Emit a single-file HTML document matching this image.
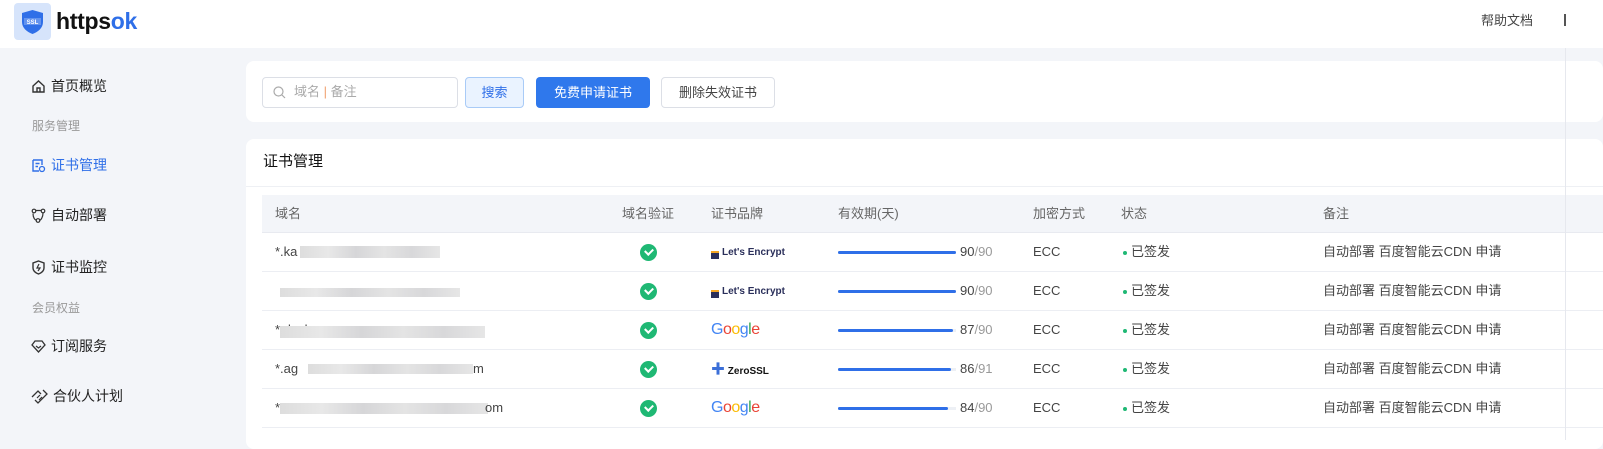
<!DOCTYPE html>
<html><head><meta charset="utf-8"><style>
*{margin:0;padding:0;box-sizing:border-box}
body{width:1603px;height:440px;overflow:hidden;background:#f3f5f9;font-family:"Liberation Sans","Noto Sans CJK SC",sans-serif;color:#333;font-size:14px;position:relative;line-height:20px}
.abs{position:absolute}
.hdr{left:0;top:0;width:1603px;height:48px;background:#fff}
.nav{left:31px;font-size:14px;color:#222;display:flex;align-items:center;gap:5px;line-height:20px}
.grp{left:32px;font-size:12px;color:#999}
.card{background:#fff;border-radius:8px}
.th{color:#666;font-size:13px}
.td{font-size:13px;color:#444}
.row{left:262px;width:1341px;height:39px;border-bottom:1px solid #eceef3}
.bar{height:3px;background:#edf0f5;width:118px;left:838px}
.bar i{display:block;height:3px;background:#2f6fe8;border-radius:2px}
.blur{background:linear-gradient(90deg,#ddd,#e8e8e8 20%,#d6d6d8 40%,#e4e4e4 60%,#d8d8da 80%,#e6e6e6);height:12px}
.chk{width:17px;height:17px;border-radius:50%;background:#1fb874;left:640px}
.chk:after{content:"";position:absolute;left:5px;top:4px;width:6px;height:4px;border-left:2px solid #fff;border-bottom:2px solid #fff;transform:rotate(-45deg)}
.dot{width:4px;height:4px;border-radius:50%;background:#1fb874;left:1123px}
.le{left:711px;font-size:10px;font-weight:bold;color:#2a2f5a;display:flex;align-items:flex-end;gap:3px;line-height:12px}
.le span{display:inline-block;width:8px;height:8px;background:#2a2f5a;border-top:2px solid #f5a623}
.gg{left:711px;font-size:16px;letter-spacing:-0.5px;line-height:18px}
</style></head><body>
<div class="abs hdr"></div>
<div class="abs" style="left:14px;top:3px;width:37px;height:37px;background:#d6e4fb;border-radius:4px"></div>
<svg class="abs" style="left:20px;top:9px" width="25" height="26" viewBox="0 0 25 26"><path d="M12.5 1 L23 4 V13 C23 19 18 23 12.5 25 C7 23 2 19 2 13 V4 Z" fill="#2f6fe8"/><rect x="4" y="9" width="17" height="7" fill="#fff" opacity=".25"/><text x="12.5" y="15" font-size="6" fill="#fff" text-anchor="middle" font-family="Liberation Sans" font-weight="bold">SSL</text></svg>
<div class="abs" style="left:56px;top:6px;font-size:23px;line-height:30px;font-weight:bold;color:#111;letter-spacing:-0.3px">https<span style="color:#2f6fe8">ok</span></div>
<div class="abs" style="left:1481px;top:11px;font-size:13px;color:#444">帮助文档</div>
<div class="abs" style="left:1564px;top:14px;width:2px;height:12px;background:#555"></div>

<div class="abs nav" style="top:76px"><svg width="15" height="15" viewBox="0 0 15 15"><path d="M2 7 L7.5 2 L13 7 V13 H2 Z M6 13 V9 H9 V13" fill="none" stroke="#333" stroke-width="1.4"/></svg>首页概览</div>
<div class="abs grp" style="top:116px">服务管理</div>
<div class="abs nav" style="top:155px;color:#2f6fe8"><svg width="15" height="15" viewBox="0 0 15 15"><path d="M2 2 H11 V7 M2 2 V13 H8 M4.5 5.5 H8.5 M4.5 8.5 H7" fill="none" stroke="#2f6fe8" stroke-width="1.4"/><circle cx="11" cy="11" r="2.5" fill="none" stroke="#2f6fe8" stroke-width="1.3"/></svg>证书管理</div>
<div class="abs nav" style="top:205px"><svg width="15" height="15" viewBox="0 0 15 15"><circle cx="3" cy="3" r="1.8" fill="none" stroke="#333" stroke-width="1.2"/><circle cx="12" cy="3" r="1.8" fill="none" stroke="#333" stroke-width="1.2"/><circle cx="7" cy="12.5" r="1.8" fill="none" stroke="#333" stroke-width="1.2"/><path d="M2 5.5 C2 10 4 12 5.3 12.3 M12 5 C12 9 10 12 8.8 12.3 M5 2.5 H10" fill="none" stroke="#333" stroke-width="1.2"/></svg>自动部署</div>
<div class="abs nav" style="top:257px"><svg width="15" height="15" viewBox="0 0 15 15"><path d="M7.5 1 L13 3 V8 C13 11 10 13 7.5 14 C5 13 2 11 2 8 V3 Z" fill="none" stroke="#333" stroke-width="1.4"/><path d="M8 4 L6 8 H9 L7 11" fill="none" stroke="#333" stroke-width="1.2"/></svg>证书监控</div>
<div class="abs grp" style="top:298px">会员权益</div>
<div class="abs nav" style="top:336px"><svg width="15" height="15" viewBox="0 0 15 15"><path d="M4 2 H11 L14 6 L7.5 13 L1 6 Z" fill="none" stroke="#333" stroke-width="1.3"/><path d="M5 7 L7.5 9 L10 7" fill="none" stroke="#333" stroke-width="1.2"/></svg>订阅服务</div>
<div class="abs nav" style="top:386px"><svg width="17" height="15" viewBox="0 0 17 15"><path d="M1 8 L7 2 L10 5 M4 11 L7 14 L16 5 L12 1" fill="none" stroke="#333" stroke-width="1.3"/><path d="M6 9 L9 6 M8 11 L11 8" stroke="#333" stroke-width="1.2"/></svg> 合伙人计划</div>

<div class="abs card" style="left:246px;top:61px;width:1357px;height:61px"></div>
<div class="abs" style="left:262px;top:77px;width:196px;height:31px;border:1px solid #dcdfe6;border-radius:4px;background:#fff"></div>
<svg class="abs" style="left:273px;top:86px" width="13" height="13" viewBox="0 0 13 13"><circle cx="5.5" cy="5.5" r="4.5" fill="none" stroke="#aaa" stroke-width="1.2"/><path d="M9 9 L12 12" stroke="#aaa" stroke-width="1.2"/></svg>
<div class="abs" style="left:294px;top:82px;font-size:13px;color:#aaa">域名 <span style="color:#f0a070">|</span> 备注</div>
<div class="abs" style="left:465px;top:77px;width:59px;height:31px;border:1px solid #a9cbf7;background:#eaf3ff;border-radius:4px;color:#2f6fe8;font-size:13px;text-align:center;line-height:29px">搜索</div>
<div class="abs" style="left:536px;top:77px;width:114px;height:31px;background:#2f78ec;border-radius:4px;color:#fff;font-size:13px;text-align:center;line-height:31px">免费申请证书</div>
<div class="abs" style="left:661px;top:77px;width:114px;height:31px;border:1px solid #dcdfe6;background:#fff;border-radius:4px;color:#444;font-size:13px;text-align:center;line-height:29px">删除失效证书</div>

<div class="abs card" style="left:246px;top:139px;width:1357px;height:310px"></div>
<div class="abs" style="left:263px;top:152px;font-size:15px;color:#111">证书管理</div>
<div class="abs" style="left:246px;top:186px;width:1357px;height:1px;background:#eef0f4"></div>
<div class="abs" style="left:262px;top:195px;width:1341px;height:38px;background:#f3f5f9;border-bottom:1px solid #e8eaf0"></div>
<div class="abs th" style="left:275px;top:204px">域名</div>
<div class="abs th" style="left:622px;top:204px">域名验证</div>
<div class="abs th" style="left:711px;top:204px">证书品牌</div>
<div class="abs th" style="left:838px;top:204px">有效期(天)</div>
<div class="abs th" style="left:1033px;top:204px">加密方式</div>
<div class="abs th" style="left:1121px;top:204px">状态</div>
<div class="abs th" style="left:1323px;top:204px">备注</div>

<div class="abs row" style="top:233px"></div>
<div class="abs row" style="top:272px"></div>
<div class="abs row" style="top:311px"></div>
<div class="abs row" style="top:350px"></div>
<div class="abs row" style="top:389px"></div>

<div class="abs td" style="left:275px;top:242px">*.ka</div><div class="abs blur" style="left:300px;top:246px;width:140px"></div>
<div class="abs blur" style="left:280px;top:288px;width:180px;height:9px"></div>
<div class="abs td" style="left:275px;top:320px">*.dayb</div><div class="abs blur" style="left:280px;top:326px;width:205px;height:12px"></div>
<div class="abs td" style="left:275px;top:359px">*.ag</div><div class="abs blur" style="left:308px;top:364px;width:165px;height:10px"></div><div class="abs td" style="left:473px;top:359px">m</div>
<div class="abs td" style="left:275px;top:398px">*</div><div class="abs blur" style="left:280px;top:403px;width:208px;height:11px"></div><div class="abs td" style="left:485px;top:398px">om</div>

<div class="abs chk" style="top:244px"></div><div class="abs chk" style="top:283px"></div><div class="abs chk" style="top:322px"></div><div class="abs chk" style="top:361px"></div><div class="abs chk" style="top:400px"></div>

<div class="abs le" style="top:247px"><span></span>Let's Encrypt</div>
<div class="abs le" style="top:286px"><span></span>Let's Encrypt</div>
<div class="abs gg" style="top:321px"><span style="color:#4285f4">G</span><span style="color:#ea4335">o</span><span style="color:#fbbc05">o</span><span style="color:#4285f4">g</span><span style="color:#34a853">l</span><span style="color:#ea4335">e</span></div>
<div class="abs" style="left:711px;top:360px;font-size:10px;font-weight:bold;color:#111;line-height:18px"><span style="color:#3b6fd8;font-size:14px">✚</span> ZeroSSL</div>
<div class="abs gg" style="top:399px"><span style="color:#4285f4">G</span><span style="color:#ea4335">o</span><span style="color:#fbbc05">o</span><span style="color:#4285f4">g</span><span style="color:#34a853">l</span><span style="color:#ea4335">e</span></div>

<div class="abs bar" style="top:251px"><i style="width:118px"></i></div><div class="abs td" style="left:960px;top:242px">90<span style="color:#999">/90</span></div>
<div class="abs bar" style="top:290px"><i style="width:118px"></i></div><div class="abs td" style="left:960px;top:281px">90<span style="color:#999">/90</span></div>
<div class="abs bar" style="top:329px"><i style="width:115px"></i></div><div class="abs td" style="left:960px;top:320px">87<span style="color:#999">/90</span></div>
<div class="abs bar" style="top:368px"><i style="width:113px"></i></div><div class="abs td" style="left:960px;top:359px">86<span style="color:#999">/91</span></div>
<div class="abs bar" style="top:407px"><i style="width:110px"></i></div><div class="abs td" style="left:960px;top:398px">84<span style="color:#999">/90</span></div>

<div class="abs td" style="left:1033px;top:242px">ECC</div><div class="abs td" style="left:1033px;top:281px">ECC</div><div class="abs td" style="left:1033px;top:320px">ECC</div><div class="abs td" style="left:1033px;top:359px">ECC</div><div class="abs td" style="left:1033px;top:398px">ECC</div>

<div class="abs dot" style="top:251px"></div><div class="abs td" style="left:1131px;top:242px">已签发</div>
<div class="abs dot" style="top:290px"></div><div class="abs td" style="left:1131px;top:281px">已签发</div>
<div class="abs dot" style="top:329px"></div><div class="abs td" style="left:1131px;top:320px">已签发</div>
<div class="abs dot" style="top:368px"></div><div class="abs td" style="left:1131px;top:359px">已签发</div>
<div class="abs dot" style="top:407px"></div><div class="abs td" style="left:1131px;top:398px">已签发</div>

<div class="abs td" style="left:1323px;top:242px">自动部署 百度智能云CDN 申请</div>
<div class="abs td" style="left:1323px;top:281px">自动部署 百度智能云CDN 申请</div>
<div class="abs td" style="left:1323px;top:320px">自动部署 百度智能云CDN 申请</div>
<div class="abs td" style="left:1323px;top:359px">自动部署 百度智能云CDN 申请</div>
<div class="abs td" style="left:1323px;top:398px">自动部署 百度智能云CDN 申请</div>
<div class="abs" style="left:1565px;top:48px;width:1px;height:392px;background:#e6e8ee"></div>
</body></html>
